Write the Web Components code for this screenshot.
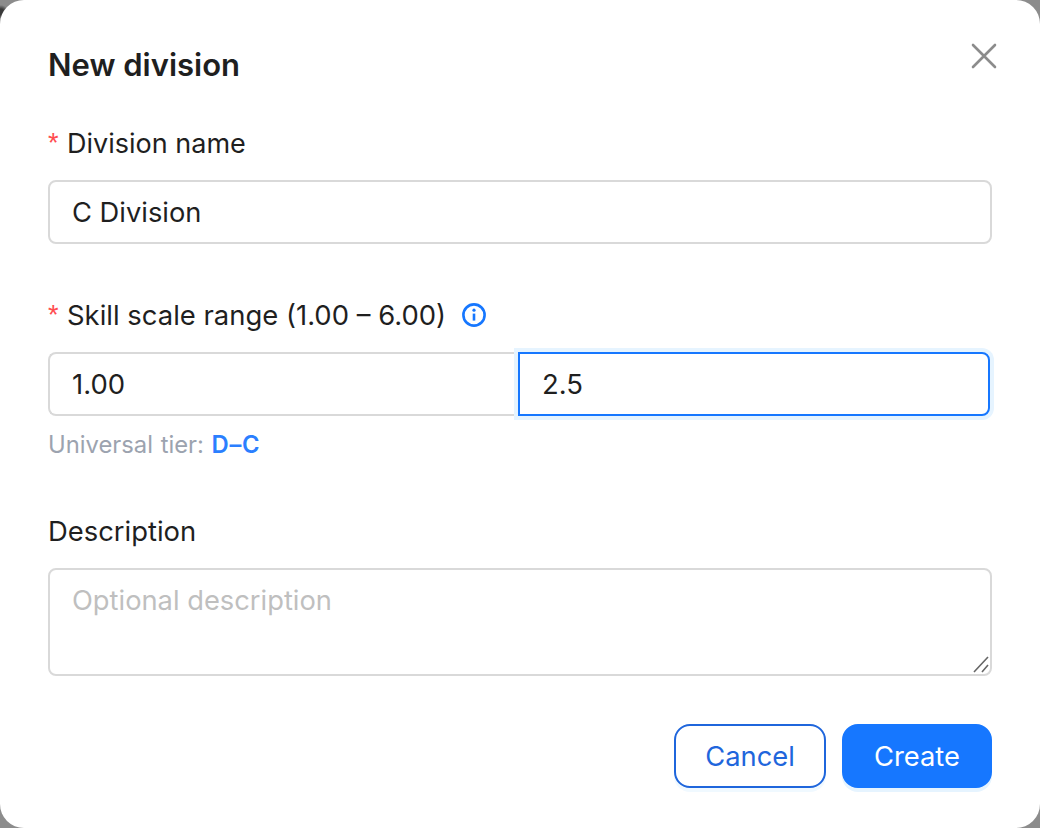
<!DOCTYPE html>
<html>
<head>
<meta charset="utf-8">
<style>
    html, body { margin: 0; height: 100%; overflow: hidden; }
    body {
        background: radial-gradient(circle at 1px 12px, #3a3a3a 0, #3a3a3a 3px, transparent 7px), #8c8c8c;
        font-family: Inter, "Liberation Sans", sans-serif;
        color: #1f1f1f;
    }
    form-field b { color: #2b7fff; font-weight: 600; letter-spacing: .6px; }
</style>
</head>
<body>
<new-division-modal title-text="New division">
    <form-field label="Division name" required size="27">
        <text-box value="C Division"></text-box>
    </form-field>
    <form-field label="Skill scale range (1.00 – 6.00)" required info gap="51" size="27.45">
        <range-box from="1.00" to="2.5"></range-box>
        <span slot="hint">Universal tier: <b>D–C</b></span>
    </form-field>
    <form-field label="Description" gap="50" size="27.4">
        <text-box placeholder="Optional description" multiline></text-box>
    </form-field>
    <app-button slot="footer">Cancel</app-button>
    <app-button slot="footer" primary>Create</app-button>
</new-division-modal>

<script>
class NewDivisionModal extends HTMLElement {
    constructor() {
        super();
        const shadow = this.attachShadow({mode: 'open'});
        shadow.innerHTML = `
<style>
    :host {
        display: flex;
        flex-direction: column;
        box-sizing: border-box;
        width: 1040px;
        height: 828px;
        padding: 47px 48px 40px;
        background: #fff;
        border-radius: 24px;
        position: relative;
    }
    h2 {
        margin: 0 0 40px;
        font-size: 31px;
        line-height: 36px;
        font-weight: 600;
        color: #1f1f1f;
    }
    .close {
        position: absolute;
        top: 42px;
        right: 42px;
        width: 28px;
        height: 28px;
        display: block;
    }
    footer {
        display: flex;
        justify-content: flex-end;
        gap: 16px;
        margin-top: auto;
    }
</style>
<h2></h2>
<svg class="close" viewBox="0 0 28 28" fill="none" stroke="#8c8c8c" stroke-width="2.6" stroke-linecap="round">
    <path d="M3 3 25 25M25 3 3 25"/>
</svg>
<slot></slot>
<footer><slot name="footer"></slot></footer>`;
        shadow.querySelector('h2').textContent = this.getAttribute('title-text');
    }
}

class FormField extends HTMLElement {
    constructor() {
        super();
        const shadow = this.attachShadow({mode: 'open'});
        shadow.innerHTML = `
<style>
    :host {
        display: block;
    }
    label {
        display: flex;
        align-items: center;
        height: 40px;
        margin-bottom: 17px;
        color: #1f1f1f;
    }
    .star {
        color: #ff4d4f;
        font-size: 27px;
        width: 19px;
        font-family: "Liberation Sans", sans-serif;
    }
    svg {
        width: 26px;
        height: 26px;
        margin-left: 15px;
    }
    .hint {
        font-size: 23.8px;
        line-height: 32px;
        margin-top: 13px;
        color: #9ca3af;
        word-spacing: 1px;
    }
</style>
<label></label>
<slot></slot>
<div class="hint"><slot name="hint"></slot></div>`;
        const label = shadow.querySelector('label');
        label.style.fontSize = this.getAttribute('size') + 'px';
        if (this.hasAttribute('required')) {
            const star = document.createElement('span');
            star.className = 'star';
            star.textContent = '*';
            label.append(star);
        }
        label.append(this.getAttribute('label'));
        if (this.hasAttribute('info')) {
            label.insertAdjacentHTML('beforeend', `
<svg viewBox="0 0 26 26" fill="none">
    <circle cx="13" cy="13" r="10.6" stroke="#1677ff" stroke-width="2.6"/>
    <circle cx="13" cy="8.2" r="1.6" fill="#1677ff"/>
    <path d="M13 11.6v7" stroke="#1677ff" stroke-width="2.6"/>
</svg>`);
        }
        if (this.hasAttribute('gap')) {
            this.style.marginTop = this.getAttribute('gap') + 'px';
        }
        if (!this.querySelector('[slot=hint]')) {
            shadow.querySelector('.hint').remove();
        }
    }
}

class TextBox extends HTMLElement {
    constructor() {
        super();
        const shadow = this.attachShadow({mode: 'open'});
        shadow.innerHTML = `
<style>
    :host {
        display: block;
        box-sizing: border-box;
        height: 64px;
        padding: 0 22px;
        border: 2px solid #d9d9d9;
        border-radius: 8px;
        background: #fff;
        font-size: 27.3px;
        line-height: 62px;
        color: #1f1f1f;
        position: relative;
    }
    :host([multiline]) {
        height: 108px;
    }
    :host([placeholder]) { color: #bfbfbf; }
    svg {
        position: absolute;
        right: 1px;
        bottom: 1px;
        width: 18px;
        height: 18px;
    }
</style>
<span></span>`;
        shadow.querySelector('span').textContent = this.getAttribute('value') || this.getAttribute('placeholder');
        if (this.hasAttribute('multiline')) {
            shadow.innerHTML += `
<svg viewBox="0 0 18 18" fill="none" stroke="#666" stroke-width="1.6">
    <path d="M3 17 17 2M11 17 17 10"/>
</svg>`;
            shadow.querySelector('span').textContent = this.getAttribute('placeholder');
        }
    }
}

class RangeBox extends HTMLElement {
    constructor() {
        super();
        const shadow = this.attachShadow({mode: 'open'});
        shadow.innerHTML = `
<style>
    :host {
        display: flex;
        height: 64px;
        font-size: 27.5px;
        color: #1f1f1f;
    }
    div {
        flex: 1;
        box-sizing: border-box;
        padding: 0 22px;
        line-height: 60px;
        border: 2px solid #d9d9d9;
        background: #fff;
    }
    .from {
        border-right: 0;
        border-radius: 8px 0 0 8px;
    }
    .to {
        flex: none;
        width: 472px;
        margin-right: 2px;
        border-color: #1677ff;
        border-radius: 0 8px 8px 0;
        box-shadow: 0 0 0 4px #e6f4ff;
    }
</style>
<div class="from"></div>
<div class="to"></div>`;
        shadow.querySelector('.from').textContent = this.getAttribute('from');
        shadow.querySelector('.to').textContent = this.getAttribute('to');
    }
}

class AppButton extends HTMLElement {
    constructor() {
        super();
        const shadow = this.attachShadow({mode: 'open'});
        shadow.innerHTML = `
<style>
    :host {
        display: flex;
        align-items: center;
        justify-content: center;
        box-sizing: border-box;
        width: 152px;
        height: 64px;
        border: 2px solid #1f66dc;
        border-radius: 16px;
        background: #fff;
        color: #1f66dc;
        font-size: 27.3px;
        box-shadow: 0 4px 0 rgba(5, 145, 255, 0.06);
    }
    :host([primary]) {
        width: 150px;
        border-color: #1677ff;
        background: #1677ff;
        color: #fff;
        box-shadow: 0 4px 0 #e6f4ff;
    }
</style>
<slot></slot>`;
    }
}

customElements.define('new-division-modal', NewDivisionModal);
customElements.define('form-field', FormField);
customElements.define('text-box', TextBox);
customElements.define('range-box', RangeBox);
customElements.define('app-button', AppButton);
</script>
</body>
</html>
